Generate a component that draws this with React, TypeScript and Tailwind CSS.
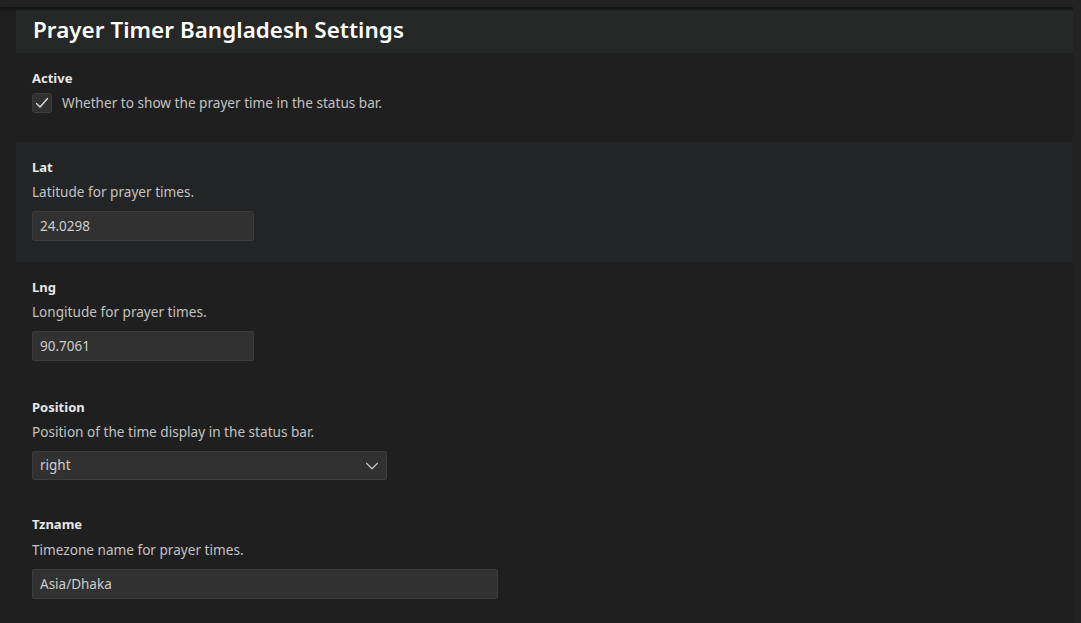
import { ChevronDown } from 'lucide-react';

const font = { fontFamily: '"Noto Sans", "Open Sans", sans-serif' };

function Section({ label, desc, children, highlight, h = 'h-[120px]', descGap = 'mt-[7px]' }: { label: string; desc: string; children: React.ReactNode; highlight?: boolean; h?: string; descGap?: string }) {
  return (
    <div className={`${h} px-4 pt-4 ${highlight ? 'bg-[#232425]' : ''}`}>
      <div className="h-[18px] text-[13px] leading-[18px] font-bold text-[#e7e7e7]">{label}</div>
      <div className={`${descGap} h-[18px] text-[13.6px] leading-[18px] text-[#c2c2c2]`}>{desc}</div>
      <div className="mt-[10px]">{children}</div>
    </div>
  );
}

function TextBox({ value, width }: { value: string; width: string }) {
  return (
    <div className={`${width} h-[30px] flex items-center px-[7px] bg-[#313131] border border-[#3c3c3c] rounded-[2px] text-[13.5px] text-[#cccccc]`}>
      {value}
    </div>
  );
}

export default function App() {
  return (
    <div className="w-[1081px] h-[623px] overflow-hidden bg-[#1f1f1f] flex" style={font}>
      <div className="w-[16px] shrink-0" />
      <div className="flex-1 flex flex-col">
        <div className="h-[7px] bg-[#222222] -ml-[16px] mr-[-8px] shadow-[0_2px_3px_#111]" />
        <div className="h-[3px]" />
        <div className="h-[43px] bg-[#262828] flex items-center pl-[17px] pb-[4px]">
          <span className="text-[22.4px] font-semibold text-white tracking-[0.05px]">Prayer Timer Bangladesh Settings</span>
        </div>

        {/* Active */}
        <div className="h-[89px] px-4 pt-4">
          <div className="h-[18px] text-[13px] leading-[18px] font-bold text-[#e7e7e7]">Active</div>
          <div className="mt-[6px] flex items-center gap-[10px]">
            <div className="w-[20px] h-[20px] bg-[#313131] border border-[#3c3c3c] rounded-[3px] flex items-center justify-center">
              <svg width="16" height="16" viewBox="0 0 16 16" fill="none">
                <path d="M2.5 8.5 L6 12 L13.5 3.5" stroke="#e0e0e0" strokeWidth="1.3" strokeLinecap="round" strokeLinejoin="round" />
              </svg>
            </div>
            <span className="text-[13.6px] text-[#c2c2c2]">Whether to show the prayer time in the status bar.</span>
          </div>
        </div>

        <Section label="Lat" desc="Latitude for prayer times." highlight>
          <TextBox value="24.0298" width="w-[222px]" />
        </Section>
        <Section label="Lng" desc="Longitude for prayer times.">
          <TextBox value="90.7061" width="w-[222px]" />
        </Section>
        <Section label="Position" desc="Position of the time display in the status bar." h="h-[117px]">
          <div className="w-[355px] h-[29px] flex items-center justify-between pl-[7px] pr-[3px] bg-[#313131] border border-[#3c3c3c] rounded-[2px] text-[13.5px] text-[#cccccc]">
            <span>right</span>
            <ChevronDown size={22} strokeWidth={1.2} className="text-[#cccccc]" />
          </div>
        </Section>
        <Section label="Tzname" desc="Timezone name for prayer times." descGap="mt-[8px]">
          <TextBox value="Asia/Dhaka" width="w-[466px]" />
        </Section>
      </div>
      <div className="w-[8px] shrink-0 bg-[#222222]" />
    </div>
  );
}
